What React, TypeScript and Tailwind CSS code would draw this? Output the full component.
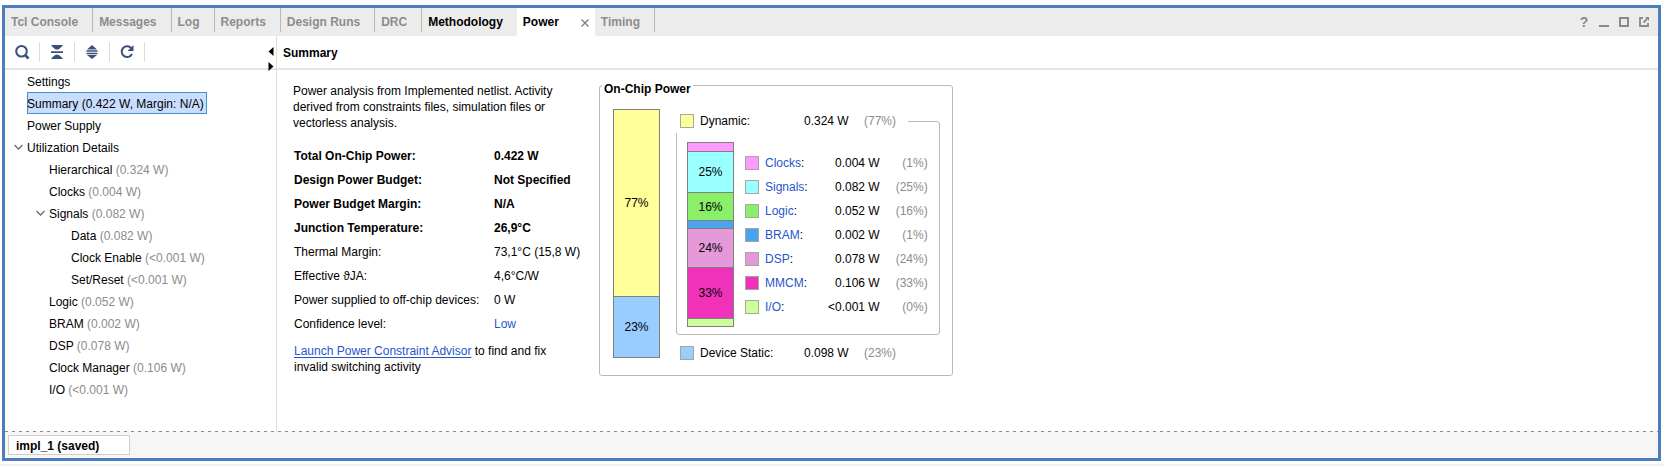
import { ReactNode } from "react";

type Tone = "muted" | "strong" | "active";

const tabs: { label: string; tone: Tone; divider: boolean }[] = [
  { label: "Tcl Console", tone: "muted", divider: true },
  { label: "Messages", tone: "muted", divider: true },
  { label: "Log", tone: "muted", divider: true },
  { label: "Reports", tone: "muted", divider: true },
  { label: "Design Runs", tone: "muted", divider: true },
  { label: "DRC", tone: "muted", divider: true },
  { label: "Methodology", tone: "strong", divider: false },
  { label: "Power", tone: "active", divider: false },
  { label: "Timing", tone: "muted", divider: true },
];

type Node = { label: string; power?: string; level: 0 | 1 | 2; open?: boolean; selected?: boolean };

const tree: Node[] = [
  { label: "Settings", level: 0 },
  { label: "Summary (0.422 W, Margin: N/A)", level: 0, selected: true },
  { label: "Power Supply", level: 0 },
  { label: "Utilization Details", level: 0, open: true },
  { label: "Hierarchical", power: "(0.324 W)", level: 1 },
  { label: "Clocks", power: "(0.004 W)", level: 1 },
  { label: "Signals", power: "(0.082 W)", level: 1, open: true },
  { label: "Data", power: "(0.082 W)", level: 2 },
  { label: "Clock Enable", power: "(<0.001 W)", level: 2 },
  { label: "Set/Reset", power: "(<0.001 W)", level: 2 },
  { label: "Logic", power: "(0.052 W)", level: 1 },
  { label: "BRAM", power: "(0.002 W)", level: 1 },
  { label: "DSP", power: "(0.078 W)", level: 1 },
  { label: "Clock Manager", power: "(0.106 W)", level: 1 },
  { label: "I/O", power: "(<0.001 W)", level: 1 },
];

const indent = { 0: "pl-2", 1: "pl-[30px]", 2: "pl-[52px]" };

const facts: { name: string; value: string; bold?: boolean; link?: boolean }[] = [
  { name: "Total On-Chip Power:", value: "0.422 W", bold: true },
  { name: "Design Power Budget:", value: "Not Specified", bold: true },
  { name: "Power Budget Margin:", value: "N/A", bold: true },
  { name: "Junction Temperature:", value: "26,9°C", bold: true },
  { name: "Thermal Margin:", value: "73,1°C (15,8 W)" },
  { name: "Effective ϑJA:", value: "4,6°C/W" },
  { name: "Power supplied to off-chip devices:", value: "0 W" },
  { name: "Confidence level:", value: "Low", link: true },
];

const parts = [
  { name: "Clocks", power: "0.004 W", share: "(1%)", color: "bg-[#ff99ff]", bar: "h-[9px]", text: "" },
  { name: "Signals", power: "0.082 W", share: "(25%)", color: "bg-[#99ffff]", bar: "h-[41px]", text: "25%" },
  { name: "Logic", power: "0.052 W", share: "(16%)", color: "bg-[#8aef69]", bar: "h-[28px]", text: "16%" },
  { name: "BRAM", power: "0.002 W", share: "(1%)", color: "bg-[#4aa3ef]", bar: "h-[8px]", text: "" },
  { name: "DSP", power: "0.078 W", share: "(24%)", color: "bg-[#e699d9]", bar: "h-[39px]", text: "24%" },
  { name: "MMCM", power: "0.106 W", share: "(33%)", color: "bg-[#f032bb]", bar: "h-[51px]", text: "33%" },
  { name: "I/O", power: "<0.001 W", share: "(0%)", color: "bg-[#ccff99]", bar: "h-[7px]", text: "" },
];

function Swatch({ color }: { color: string }) {
  return <span className={`size-3.5 shrink-0 border border-[#a6a6a6] ${color}`} />;
}

function ToolButton({ label, children }: { label: string; children: ReactNode }) {
  return (
    <button type="button" aria-label={label} className="flex h-5 w-[35px] items-center justify-center border-r border-[#dcdcdc] text-[#3c4f7c]">
      {children}
    </button>
  );
}

function Chevron() {
  return (
    <svg className="size-3 shrink-0" viewBox="0 0 12 12" fill="none" stroke="#707070" strokeWidth="1.4">
      <path d="M1.500 4l4 4 4-4" />
    </svg>
  );
}

function Tab({ label, tone, divider }: { label: string; tone: Tone; divider: boolean }) {
  if (tone === "active") {
    return (
      <div className="flex h-7 items-center bg-white px-1.5">
        <button type="button" role="tab" aria-selected="true" className="pr-[22px] font-bold text-black">{label}</button>
        <button type="button" aria-label="Close Power">
          <svg className="mt-0.5 size-2" viewBox="0 0 8 8" stroke="#808080" strokeWidth="1.4">
            <path d="M0.500 0.500l7 7M7.500 0.500l-7 7" />
          </svg>
        </button>
      </div>
    );
  }
  return (
    <button
      type="button"
      role="tab"
      aria-selected="false"
      className={`flex h-6 items-center pl-1.5 pr-3.5 pt-1 font-bold ${divider ? "border-r border-[#b8b8b8]" : ""} ${tone === "strong" ? "text-black" : "text-[#8c8c8c]"}`}
    >
      {label}
    </button>
  );
}

function TreePanel() {
  return (
    <aside className="flex w-[272px] shrink-0 flex-col border-r border-[#dedede]">
      <div className="relative flex h-[34px] items-center border-b-2 border-[#e5e5e5]">
        <ToolButton label="Search">
          <svg className="size-4" viewBox="0 0 16 16" fill="none" stroke="currentColor">
            <circle cx="7.500" cy="7.300" r="5.300" strokeWidth="2" />
            <path d="M11.500 11.500l3 3" strokeWidth="2.6" />
          </svg>
        </ToolButton>
        <ToolButton label="Collapse All">
          <svg className="size-4" viewBox="0 0 16 16" fill="currentColor">
            <path d="M2.500 1h11v1L9.500 5.500h-3L2.500 2zM2 7.200h12v1.800H2zM2.500 15h11v-1L9.500 10.700h-3L2.500 14z" />
          </svg>
        </ToolButton>
        <ToolButton label="Expand All">
          <svg className="size-4" viewBox="0 0 16 16" fill="currentColor">
            <path d="M8 1l5 4.500H3zM2.500 6.200h11v1.500h-11zM2.500 8.700h11v1.500h-11zM3 11h10l-5 4z" />
          </svg>
        </ToolButton>
        <ToolButton label="Refresh">
          <svg className="size-4" viewBox="0 0 16 16">
            <path d="M12.300 4.200A5.400 5.400 0 1 0 13 10" fill="none" stroke="currentColor" strokeWidth="2" />
            <path d="M14.500 1v6H8.500z" fill="currentColor" />
          </svg>
        </ToolButton>
        <svg className="absolute right-0.5 top-2.5 h-[26px] w-1.5" viewBox="0 0 6 26">
          <path d="M5.500 1v9L0.500 5.500zM0.500 16v9l5-4.500z" />
        </svg>
      </div>
      <ul role="tree" aria-label="Power report sections">
        {tree.map((n) => (
          <li
            key={n.label}
            role="treeitem"
            aria-selected={!!n.selected}
            aria-expanded={n.open}
            className={`flex h-[22px] items-center gap-0.5 ${indent[n.level]}`}
          >
            <span className="flex w-3 shrink-0">{n.open && <Chevron />}</span>
            <span className={`pb-0.5 pt-1 ${n.selected ? "bg-[#c9ddff] pr-[3px] ring-1 ring-inset ring-[#4a90c8]" : ""}`}>
              {n.label}
              {n.power && <span className="text-[#8c8c8c]"> {n.power}</span>}
            </span>
          </li>
        ))}
      </ul>
    </aside>
  );
}

function Facts() {
  return (
    <div className="w-[306px] shrink-0 pt-2 leading-4">
      <p className="w-[280px]">
        Power analysis from Implemented netlist. Activity derived from constraints files, simulation files or vectorless analysis.
      </p>
      <table className="mt-[13px] w-full text-left">
        <tbody>
          {facts.map((f) => (
            <tr key={f.name} className={`h-6 ${f.bold ? "font-bold" : ""}`}>
              <th scope="row" className={`w-[201px] whitespace-nowrap p-0 pl-px ${f.bold ? "font-bold" : "font-normal"}`}>{f.name}</th>
              <td className="p-0">
                {f.link ? <a href="#confidence" className="text-[#1f56cc]">{f.value}</a> : f.value}
              </td>
            </tr>
          ))}
        </tbody>
      </table>
      <p className="mt-[7px] pl-px">
        <a href="#advisor" className="text-[#1f56cc] underline underline-offset-2">Launch Power Constraint Advisor</a>
        <span> to find and fix</span>
        <br />
        <span>invalid switching activity</span>
      </p>
    </div>
  );
}

function OnChipPower() {
  return (
    <fieldset className="w-[354px] shrink-0 rounded-[3px] border border-[#bababa] pb-2.5">
      <legend className="ml-0.5 h-5 px-0.5 pt-1.5 font-bold leading-4">On-Chip Power</legend>
      <div className="flex gap-4 pl-[13px] pt-3.5">
        <div className="flex w-[47px] flex-col self-start border border-[#808080]">
          <div className="flex h-[186px] items-center justify-center bg-[#ffff99]">77%</div>
          <div className="flex h-[61px] items-center justify-center border-t border-[#808080] bg-[#99ccff]">23%</div>
        </div>
        <div>
          <fieldset className="w-[264px] rounded-[3px] border border-[#bababa]">
            <legend className="-ml-px flex h-6 w-[232px] items-center bg-white pl-1">
              <Swatch color="bg-[#ffff99]" />
              <span className="w-[110px] pl-1.5">Dynamic:</span>
              <span className="w-[60px]">0.324 W</span>
              <span className="text-[#8c8c8c]">(77%)</span>
            </legend>
            <div className="flex pb-[7px] pl-2.5 pt-[9px]">
              <div className="flex w-[47px] flex-col divide-y divide-[#808080] border border-[#808080]">
                {parts.map((p) => (
                  <div key={p.name} className={`flex items-center justify-center ${p.color} ${p.bar}`}>{p.text}</div>
                ))}
              </div>
              <table className="ml-[11px] mt-[9px] self-start">
                <tbody>
                  {parts.map((p) => (
                    <tr key={p.name} className="h-6">
                      <th scope="row" className="p-0 font-normal">
                        <span className="flex items-center gap-1.5">
                          <Swatch color={p.color} />
                          <span><a href="#details" className="text-[#1f56cc]">{p.name}</a>:</span>
                        </span>
                      </th>
                      <td className="w-[72px] whitespace-nowrap p-0 text-right">{p.power}</td>
                      <td className="w-12 p-0 text-right text-[#8c8c8c]">{p.share}</td>
                    </tr>
                  ))}
                </tbody>
              </table>
            </div>
          </fieldset>
          <div className="mt-1.5 flex h-6 items-center pl-1">
            <Swatch color="bg-[#99ccff]" />
            <span className="w-[110px] pl-1.5">Device Static:</span>
            <span className="w-[60px]">0.098 W</span>
            <span className="text-[#8c8c8c]">(23%)</span>
          </div>
        </div>
      </div>
    </fieldset>
  );
}

export default function App() {
  return (
    <div className="flex min-h-screen flex-col bg-[#f0f0f0] font-['Liberation_Sans',Arial,sans-serif] text-[12px] leading-4 text-black">
      <div className="mb-0.5 flex flex-1 flex-col bg-white pb-[3px] pl-0.5 pr-[3px] pt-[5px]">
        <div className="flex flex-1 flex-col border-[3px] border-[#4e7dbe]">
          <header className="flex h-7 items-start bg-[#ececec]">
            <div role="tablist" aria-label="Result windows" className="flex items-start">
              {tabs.map((t) => <Tab key={t.label} {...t} />)}
            </div>
            <div className="ml-auto flex h-7 items-center gap-2.5 pr-[9px] text-[#8a8a8a]">
              <button type="button" aria-label="Help" className="w-2.5 text-[14px] font-bold">?</button>
              <button type="button" aria-label="Minimize">
                <svg className="size-2.5" viewBox="0 0 10 10"><path d="M0 8h10v2H0z" fill="currentColor" /></svg>
              </button>
              <button type="button" aria-label="Maximize">
                <svg className="size-2.5" viewBox="0 0 10 10"><path d="M1 1h8v8H1z" fill="none" stroke="currentColor" strokeWidth="2" /></svg>
              </button>
              <button type="button" aria-label="Float">
                <svg className="size-2.5" viewBox="0 0 10 10" fill="none" stroke="currentColor" strokeWidth="1.8">
                  <path d="M4 1H1v8h8V6M4.500 5.500L8 2" />
                  <path d="M6 0h4v4z" fill="currentColor" stroke="none" />
                </svg>
              </button>
            </div>
          </header>
          <div className="flex flex-1">
            <TreePanel />
            <main className="flex flex-1 flex-col">
              <h1 className="flex h-[34px] items-center border-b-2 border-[#e5e5e5] pl-1.5 pt-0.5 font-bold">Summary</h1>
              <div className="flex items-start pl-4 pt-[5px]">
                <Facts />
                <OnChipPower />
              </div>
            </main>
          </div>
          <footer className="bg-[#f6f6f6]">
            <div className="h-px bg-[repeating-linear-gradient(90deg,#8c8c8c_0_3px,transparent_3px_7px)]" />
            <div className="px-[3px] py-[3px]">
              <div className="flex h-5 w-[122px] items-center border border-[#cfcfcf] bg-white pl-[7px] pt-0.5 font-bold">impl_1 (saved)</div>
            </div>
          </footer>
        </div>
      </div>
    </div>
  );
}
